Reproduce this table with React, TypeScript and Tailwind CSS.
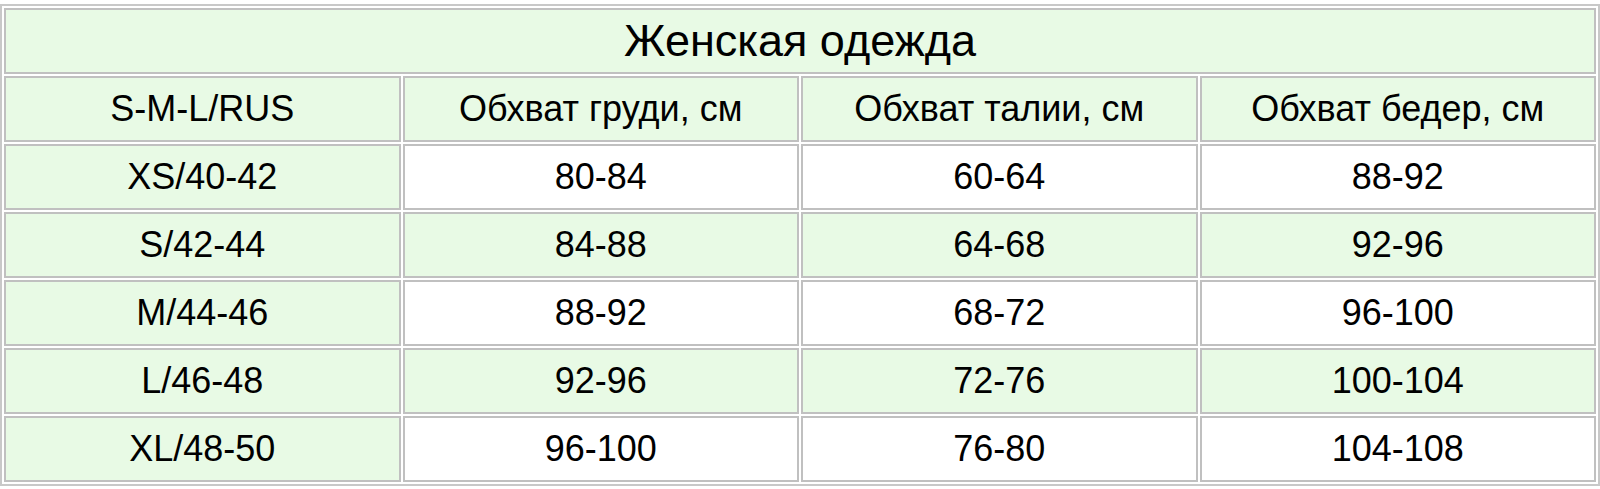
import React from "react";

const rows = [
  ["XS/40-42", "80-84", "60-64", "88-92"],
  ["S/42-44", "84-88", "64-68", "92-96"],
  ["M/44-46", "88-92", "68-72", "96-100"],
  ["L/46-48", "92-96", "72-76", "100-104"],
  ["XL/48-50", "96-100", "76-80", "104-108"],
];

const headers = ["S-M-L/RUS", "Обхват груди, см", "Обхват талии, см", "Обхват бедер, см"];

export default function App() {
  return (
    <div
      className="w-[1600px] h-[489px] bg-white pt-[4px] text-black"
      style={{ fontFamily: '"Liberation Sans", Arial, sans-serif' }}
    >
      <div className="border-2 border-[#c8c8c8] p-[2px] grid grid-cols-4 gap-[2px] auto-rows-[66px]">
        <div className="col-span-4 border-2 border-[#c0c0c0] bg-[#e8fae5] flex items-center justify-center text-[45px]">
          Женская одежда
        </div>
        {headers.map((h) => (
          <div
            key={h}
            className="border-2 border-[#c0c0c0] bg-[#e8fae5] flex items-center justify-center text-[36px]"
          >
            {h}
          </div>
        ))}
        {rows.map((r, i) =>
          r.map((c, j) => (
            <div
              key={i + "-" + j}
              className={
                "border-2 border-[#c0c0c0] flex items-center justify-center text-[36px] " +
                (j === 0 || i % 2 === 1 ? "bg-[#e8fae5]" : "bg-white")
              }
            >
              {c}
            </div>
          ))
        )}
      </div>
    </div>
  );
}
